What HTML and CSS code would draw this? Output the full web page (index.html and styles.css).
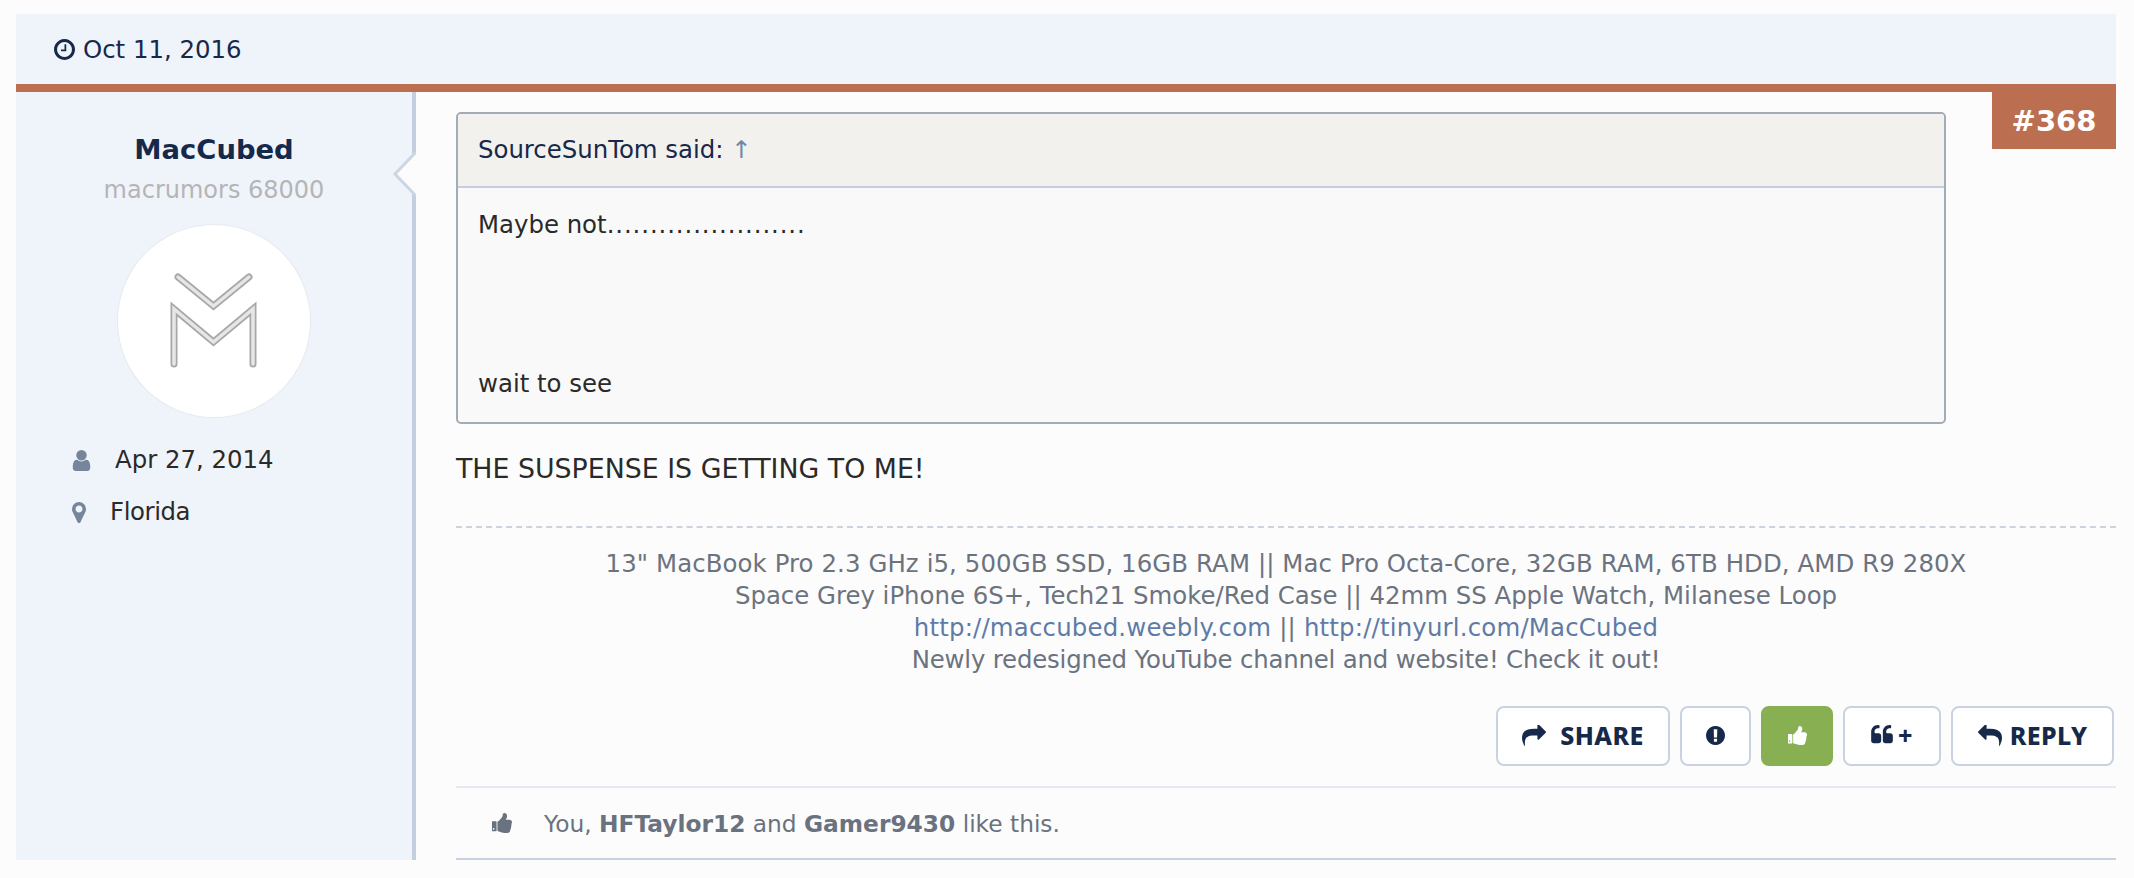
FILE: index.html
```html
<!DOCTYPE html>
<html lang="en">
<head>
<meta charset="utf-8">
<title>Post 368</title>
<link rel="stylesheet" href="styles.css">
</head>
<body>
<article class="post">
  <header class="post-head">
    <svg class="ico-clock" viewBox="128 128 1536 1536"><path d="M1024 544v448q0 14-9 23t-23 9h-320q-14 0-23-9t-9-23v-64q0-14 9-23t23-9h224v-352q0-14 9-23t23-9h64q14 0 23 9t9 23zm416 352q0-148-73-273t-198-198-273-73-273 73-198 198-73 273 73 273 198 198 273 73 273-73 198-198 73-273zm224 0q0 209-103 385.5t-279.5 279.5-385.5 103-385.5-103-279.5-279.5-103-385.5 103-385.5 279.5-279.5 385.5-103 385.5 103 279.5 279.5 103 385.5z"/></svg>
    <span>Oct 11, 2016</span>
  </header>
  <div class="post-row">
    <aside class="side">
      <svg class="side-arrow" viewBox="0 0 24 44"><path d="M24 0 L3 22 L24 44" class="arrow-fill"/><path d="M24 0 L3 22 L24 44" class="arrow-line"/></svg>
      <div class="name">MacCubed</div>
      <div class="rank">macrumors 68000</div>
      <div class="avatar">
        <svg class="avatar-logo" viewBox="0 0 192 192">
          <g class="m-out"><path d="M60 52 L95.500 81 L131 52"/><path d="M56 139 V84 L95.500 117 L135 84 V139"/></g>
          <g class="m-in"><path d="M60 52 L95.500 81 L131 52"/><path d="M56 139 V84 L95.500 117 L135 84 V139"/></g>
        </svg>
      </div>
      <div class="meta meta-joined">
        <svg class="ico-user" viewBox="256 128 1280 1536"><path d="M1536 1399q0 109-62.5 187t-150.5 78h-854q-88 0-150.5-78t-62.5-187q0-85 8.5-160.5t31.5-152 58.5-131 94-89 134.5-34.5q131 128 313 128t313-128q76 0 134.5 34.5t94 89 58.5 131 31.5 152 8.5 160.5zm-256-887q0 159-112.5 271.5t-271.5 112.5-271.5-112.5-112.5-271.5 112.5-271.5 271.5-112.5 271.5 112.5 112.5 271.5z"/></svg>
        <span>Apr 27, 2014</span>
      </div>
      <div class="meta meta-place">
        <svg class="ico-pin" viewBox="0 128 1024 1536"><path d="M768 640q0-106-75-181t-181-75-181 75-75 181 75 181 181 75 181-75 75-181zm256 0q0 109-33 179l-364 774q-16 33-47.5 52t-67.5 19-67.5-19-46.5-52l-365-774q-33-70-33-179 0-212 150-362t362-150 362 150 150 362z"/></svg>
        <span class="place">Florida</span>
      </div>
    </aside>
    <main class="content">
      <div class="badge">#368</div>
      <blockquote class="quote">
        <div class="quote-head">SourceSunTom said: <a class="quote-up" href="#">↑</a></div>
        <div class="quote-body">Maybe not<span class="dots">.......................</span><br><br><br>wait to see</div>
      </blockquote>
      <p class="message">THE SUSPENSE IS GETTING TO ME!</p>
      <div class="signature">
        <div class="sig-wide">13" MacBook Pro 2.3 GHz i5, 500GB SSD, 16GB RAM || Mac Pro Octa-Core, 32GB RAM, 6TB HDD, AMD R9 280X</div>
        <div>Space Grey iPhone 6S+, Tech21 Smoke/Red Case || 42mm SS Apple Watch, Milanese Loop</div>
        <div class="sig-links"><a href="#">http://maccubed.weebly.com</a> || <a href="#">http://tinyurl.com/MacCubed</a></div>
        <div class="sig-tight">Newly redesigned YouTube channel and website! Check it out!</div>
      </div>
      <div class="actions">
        <a class="btn btn-share" href="#">
          <svg class="ico-share" viewBox="0 128 1792 1536"><path transform="matrix(-1 0 0 1 1792 0)" d="M1792 1120q0 166-127 451-3 7-10.5 24t-13.5 30-13 22q-12 17-28 17-15 0-23.5-10t-8.5-25q0-9 2.5-26.5t2.5-23.5q5-68 5-123 0-101-17.5-181t-48.5-138.5-80-101-105.5-69.5-133-42.5-154-21.5-175.5-6h-224v256q0 26-19 45t-45 19-45-19l-512-512q-19-19-19-45t19-45l512-512q19-19 45-19t45 19 19 45v256h224q713 0 875 403 53 134 53 333z"/></svg>
          <span>SHARE</span>
        </a>
        <a class="btn btn-report" href="#">
          <svg class="ico-excl" viewBox="128 128 1536 1536"><path d="M896 128q209 0 385.5 103t279.5 279.5 103 385.5-103 385.5-279.5 279.5-385.5 103-385.5-103-279.5-279.5-103-385.5 103-385.5 279.5-279.5 385.5-103zm128 1247v-190q0-14-9-23.5t-22-9.5h-192q-13 0-23 10t-10 23v190q0 13 10 23t23 10h192q13 0 22-9.5t9-23.5zm-2-344l18-621q0-12-10-18-10-8-24-8h-220q-14 0-24 8-10 6-10 18l17 621q0 10 10 17.5t24 7.5h185q14 0 23.5-7.5t10.5-17.5z"/></svg>
        </a>
        <a class="btn btn-like" href="#">
          <svg class="ico-thumb" viewBox="128 128 1536 1536"><path d="M320 1344q0-26-19-45t-45-19q-27 0-45.5 19t-18.5 45q0 27 18.5 45.5t45.5 18.5q26 0 45-18.5t19-45.5zm160-512v640q0 26-19 45t-45 19h-288q-26 0-45-19t-19-45v-640q0-26 19-45t45-19h288q26 0 45 19t19 45zm1184 0q0 86-55 149 15 44 15 76 3 76-43 137 17 56 0 117-15 57-54 94 9 112-49 181-64 76-197 78h-129q-66 0-144-15.5t-121.5-29-120.5-39.5q-123-43-158-44-26-1-45-19.5t-19-44.5v-641q0-25 18-43.5t43-20.5q24-2 76-59t101-121q68-87 101-120 18-18 31-48t17.5-48.5 13.5-60.5q7-39 12.5-61t19.5-52 34-50q19-19 45-19 46 0 82.5 10.5t60 26 40 40.5 24 45 12 50 5 45 .5 39q0 38-9.5 76t-19 60-27.5 56q-3 6-10 18t-11 22-8 24h277q78 0 135 57t57 135z"/></svg>
        </a>
        <a class="btn btn-quote" href="#">
          <svg class="ico-quote" viewBox="0 128 1664 1536"><path d="M768 960v384q0 80-56 136t-136 56h-384q-80 0-136-56t-56-136v-704q0-104 40.5-198.5t109.5-163.5 163.5-109.5 198.5-40.5h64q26 0 45 19t19 45v128q0 26-19 45t-45 19h-64q-106 0-181 75t-75 181v32q0 40 28 68t68 28h224q80 0 136 56t56 136zm896 0v384q0 80-56 136t-136 56h-384q-80 0-136-56t-56-136v-704q0-104 40.5-198.5t109.5-163.5 163.5-109.5 198.5-40.5h64q26 0 45 19t19 45v128q0 26-19 45t-45 19h-64q-106 0-181 75t-75 181v32q0 40 28 68t68 28h224q80 0 136 56t56 136z"/></svg>
          <span>+</span>
        </a>
        <a class="btn btn-reply" href="#">
          <svg class="ico-reply" viewBox="0 128 1792 1536"><path d="M1792 1120q0 166-127 451-3 7-10.5 24t-13.5 30-13 22q-12 17-28 17-15 0-23.5-10t-8.5-25q0-9 2.5-26.5t2.5-23.5q5-68 5-123 0-101-17.5-181t-48.5-138.5-80-101-105.5-69.5-133-42.5-154-21.5-175.5-6h-224v256q0 26-19 45t-45 19-45-19l-512-512q-19-19-19-45t19-45l512-512q19-19 45-19t45 19 19 45v256h224q713 0 875 403 53 134 53 333z"/></svg>
          <span>REPLY</span>
        </a>
      </div>
      <div class="likes">
        <svg class="ico-likes" viewBox="128 128 1536 1536"><path d="M320 1344q0-26-19-45t-45-19q-27 0-45.5 19t-18.5 45q0 27 18.5 45.5t45.5 18.5q26 0 45-18.5t19-45.5zm160-512v640q0 26-19 45t-45 19h-288q-26 0-45-19t-19-45v-640q0-26 19-45t45-19h288q26 0 45 19t19 45zm1184 0q0 86-55 149 15 44 15 76 3 76-43 137 17 56 0 117-15 57-54 94 9 112-49 181-64 76-197 78h-129q-66 0-144-15.5t-121.5-29-120.5-39.5q-123-43-158-44-26-1-45-19.5t-19-44.5v-641q0-25 18-43.5t43-20.5q24-2 76-59t101-121q68-87 101-120 18-18 31-48t17.5-48.5 13.5-60.5q7-39 12.5-61t19.5-52 34-50q19-19 45-19 46 0 82.5 10.5t60 26 40 40.5 24 45 12 50 5 45 .5 39q0 38-9.5 76t-19 60-27.5 56q-3 6-10 18t-11 22-8 24h277q78 0 135 57t57 135z"/></svg>
        <span>You, <b>HFTaylor12</b> and <b>Gamer9430</b> like this.</span>
      </div>
    </main>
  </div>
</article>
</body>
</html>
```

FILE: styles.css
```css
* { box-sizing: border-box; }
html, body { margin: 0; }
body {
  background: #fcfcfc;
  padding: 14px 18px 0 16px;
  font-family: "DejaVu Sans", Verdana, sans-serif;
  font-size: 24.4px;
  color: #2a2a2a;
}
a { text-decoration: none; color: inherit; }
svg path { fill: currentColor; }

.post { width: 2100px; }

.post-head {
  height: 70px;
  background: #eff4fb;
  color: #16294a;
  display: flex;
  align-items: center;
  padding-left: 38px;
  gap: 8px;
}
.ico-clock { width: 21px; height: 21px; }

.post-row {
  display: flex;
  border-top: 8px solid #bc6f50;
  height: 776px;
}

.side {
  position: relative;
  width: 400px;
  flex: none;
  background: #eff4fb;
  border-right: 4px solid #c3cede;
  display: flex;
  flex-direction: column;
  align-items: center;
  padding-top: 40px;
}
.side-arrow { position: absolute; right: -4px; top: 60px; width: 24px; height: 44px; }
.side .arrow-fill { fill: #fcfcfc; }
.side .arrow-line { fill: none; stroke: #ccd6e4; stroke-width: 3px; }

.name { font-size: 27.4px; font-weight: 700; color: #16294a; line-height: 36px; }
.rank { font-size: 24px; color: #b5b5b5; line-height: 36px; margin-top: 4px; }
.avatar {
  width: 192px;
  height: 192px;
  border-radius: 50%;
  background: #fff;
  margin-top: 17px;
  box-shadow: 0 0 0 1px #e6eaf0;
}
.avatar-logo { display: block; width: 192px; height: 192px; filter: blur(.4px); }
.avatar-logo path { fill: none; stroke-linecap: round; }
.m-out path { stroke: #a8a8a8; stroke-width: 7px; }
.m-in path { stroke: #e6e6e6; stroke-width: 3.500px; }

.meta { align-self: flex-start; display: flex; align-items: center; line-height: 36px; color: #2a2a2a; }
.meta-joined { margin: 25px 0 0 56px; gap: 24px; }
.meta-place { margin: 16px 0 0 56px; gap: 24px; }
.place { letter-spacing: -.4px; }
.ico-user { width: 19px; height: 21px; color: #76859b; }
.ico-pin { width: 14px; height: 21px; color: #76859b; }

.content {
  position: relative;
  flex: 1;
  padding: 20px 0 0 40px;
}
.badge {
  position: absolute;
  right: 0;
  top: 0;
  width: 124px;
  height: 57px;
  background: #bc6f50;
  color: #fff;
  font-size: 29px;
  font-weight: 700;
  display: flex;
  align-items: center;
  justify-content: center;
}

.quote {
  margin: 0;
  width: 1490px;
  height: 312px;
  border: 2px solid #a3abb7;
  border-radius: 5px;
  background: #f9f9f9;
}
.quote-head {
  height: 74px;
  background: #f2f1ee;
  border-bottom: 2px solid #c3cede;
  border-radius: 3px 3px 0 0;
  padding-left: 20px;
  line-height: 72px;
  color: #16294a;
}
.quote-up { color: #6f88ae; }
.quote-body { padding: 10px 20px 0; line-height: 53px; }
.dots { letter-spacing: .9px; }

.message { margin: 27px 0 0; line-height: 36px; font-size: 26.800px; }

.signature {
  margin-top: 39px;
  border-top: 2px dashed #cdd3dc;
  padding-top: 20px;
  text-align: center;
  line-height: 32px;
  color: #6b7380;
}
.signature a { color: #5f7ba5; }
.sig-wide { letter-spacing: .1px; }
.sig-links { letter-spacing: .19px; }
.sig-tight { letter-spacing: -.18px; }

.actions {
  display: flex;
  justify-content: flex-end;
  gap: 10px;
  margin-top: 30px;
  padding-right: 2px;
}
.btn {
  height: 60px;
  border: 2px solid #c8d2e0;
  border-radius: 8px;
  background: #fff;
  color: #16294a;
  display: flex;
  align-items: center;
  justify-content: center;
  padding-bottom: 2px;
  font-family: "Noto Sans", sans-serif;
  font-weight: 800;
  font-size: 25px;
  letter-spacing: .4px;
}
.btn-share { width: 174px; gap: 14px; }
.btn-report { width: 71px; }
.btn-like { width: 72px; background: #88b052; border-color: #88b052; color: #fff; }
.btn-quote { width: 98px; gap: 5px; }
.btn-reply { width: 163px; gap: 8px; }
.ico-share, .ico-reply { width: 24px; height: 21px; }
.ico-excl { width: 19px; height: 19px; }
.ico-thumb { width: 19px; height: 19px; }
.ico-quote { width: 22px; height: 20px; }

.likes {
  margin-top: 20px;
  height: 74px;
  border-top: 2px solid #e4e9f3;
  border-bottom: 2px solid #c8d2e0;
  display: flex;
  align-items: center;
  padding-left: 36px;
  gap: 32px;
  font-size: 23.300px;
  color: #6a7280;
}
.ico-likes { width: 20px; height: 20px; color: #6a7280; }
```
